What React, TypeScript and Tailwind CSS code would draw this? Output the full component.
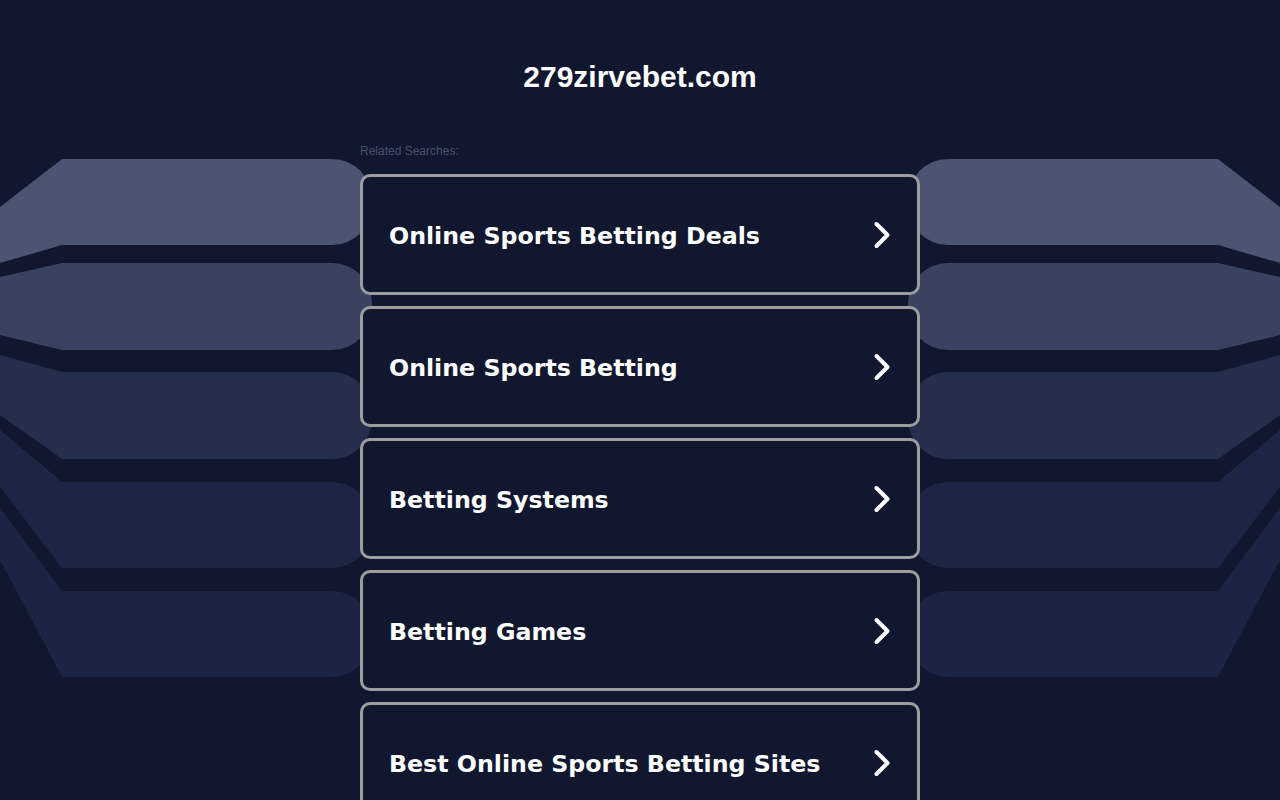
const searches = [
    'Online Sports Betting Deals',
    'Online Sports Betting',
    'Betting Systems',
    'Betting Games',
    'Best Online Sports Betting Sites',
];

// left-side bands: [top at x=0, top at x=62, bottom at x=0, bottom at x=62], colour, textured
const bands: { y: [number, number, number, number]; fill: string; dots?: boolean }[] = [
    { y: [207, 159, 263, 245], fill: '#4b5572' },
    { y: [277, 263, 335, 350], fill: '#394260' },
    { y: [355, 372, 415, 459], fill: '#262e4d' },
    { y: [430, 482, 487, 568], fill: '#1c2444', dots: true },
    { y: [508, 591, 560, 677], fill: '#1b2342', dots: true },
];

function bandPath(y: [number, number, number, number]) {
    const [t0, t1, b0, b1] = y;
    const r = 40;
    return `M0 ${t0} L62 ${t1} L${372 - r} ${t1} A${r} ${r} 0 0 1 372 ${t1 + r} L372 ${b1 - r} A${r} ${r} 0 0 1 ${372 - r} ${b1} L62 ${b1} L0 ${b0} Z`;
}

function Bands() {
    return (
        <svg className="absolute inset-0 pointer-events-none" width="1280" height="800" viewBox="0 0 1280 800">
            <defs>
                <pattern id="dots" width="4" height="4" patternUnits="userSpaceOnUse">
                    <rect width="1" height="1" fill="#2c3662" />
                    <rect x="2" y="2" width="1" height="1" fill="#2c3662" />
                </pattern>
            </defs>
            {[false, true].map((mirror) => (
                <g key={String(mirror)} transform={mirror ? 'translate(1280 0) scale(-1 1)' : undefined}>
                    {bands.map((b, i) => (
                        <g key={i}>
                            <path d={bandPath(b.y)} fill={b.fill} />
                            {b.dots && <path d={bandPath(b.y)} fill="url(#dots)" opacity="0.35" />}
                        </g>
                    ))}
                </g>
            ))}
        </svg>
    );
}

export default function App() {
    return (
        <div className="relative min-h-screen overflow-hidden bg-[#11172e]" style={{ fontFamily: '"Liberation Sans", Arial, sans-serif' }}>
            <Bands />
            <div className="relative flex flex-col items-center">
                <h1 className="pt-[60px] text-[30px] leading-[34px] font-bold text-white">279zirvebet.com</h1>

                <div className="mt-[50px] w-[560px]">
                    <p className="text-[12px] leading-[14px] text-[#48516f]">Related Searches:</p>
                    <div className="mt-[16px] flex flex-col gap-[11px]">
                        {searches.map((s) => (
                            <a
                                key={s}
                                href="#"
                                className="flex h-[121px] items-center justify-between rounded-[10px] border-[3px] border-[#9d9d9d] bg-[#11172e] pl-[26px] pr-[23px] text-white"
                            >
                                <span className="mt-[5px] text-[23.7px] font-bold" style={{ fontFamily: '"DejaVu Sans", Verdana, sans-serif' }}>{s}</span>
                                <svg width="22" height="30" viewBox="0 0 22 30" fill="none" className="mt-[1px]">
                                    <path d="M4.5 4 L15.5 15 L4.5 26" stroke="white" strokeWidth="4" strokeLinecap="round" strokeLinejoin="round" />
                                </svg>
                            </a>
                        ))}
                    </div>
                </div>
            </div>
        </div>
    );
}
